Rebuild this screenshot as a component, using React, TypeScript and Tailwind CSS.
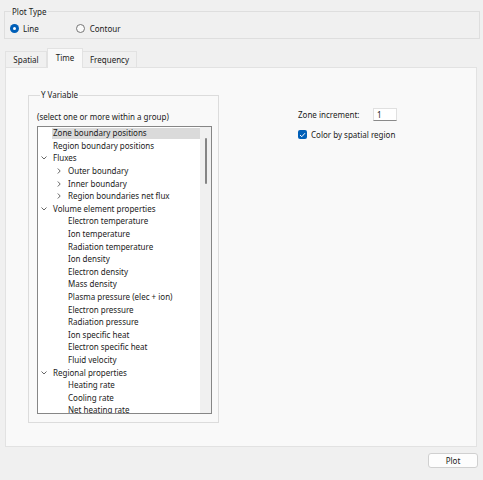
import React from "react";

type Item = { label: string; level: 0 | 1; chevron?: "down" | "right"; selected?: boolean };

const items: Item[] = [
  { label: "Zone boundary positions", level: 0, selected: true },
  { label: "Region boundary positions", level: 0 },
  { label: "Fluxes", level: 0, chevron: "down" },
  { label: "Outer boundary", level: 1, chevron: "right" },
  { label: "Inner boundary", level: 1, chevron: "right" },
  { label: "Region boundaries net flux", level: 1, chevron: "right" },
  { label: "Volume element properties", level: 0, chevron: "down" },
  { label: "Electron temperature", level: 1 },
  { label: "Ion temperature", level: 1 },
  { label: "Radiation temperature", level: 1 },
  { label: "Ion density", level: 1 },
  { label: "Electron density", level: 1 },
  { label: "Mass density", level: 1 },
  { label: "Plasma pressure (elec + ion)", level: 1 },
  { label: "Electron pressure", level: 1 },
  { label: "Radiation pressure", level: 1 },
  { label: "Ion specific heat", level: 1 },
  { label: "Electron specific heat", level: 1 },
  { label: "Fluid velocity", level: 1 },
  { label: "Regional properties", level: 0, chevron: "down" },
  { label: "Heating rate", level: 1 },
  { label: "Cooling rate", level: 1 },
  { label: "Net heating rate", level: 1 },
];

function ChevronDown() {
  return (
    <svg width="6" height="4" viewBox="0 0 6 4" className="block">
      <path d="M0.5 0.5 L3 3 L5.5 0.5" fill="none" stroke="#555" strokeWidth="0.9" />
    </svg>
  );
}

function ChevronRight() {
  return (
    <svg width="4" height="6" viewBox="0 0 4 6" className="block">
      <path d="M0.8 0.5 L3.2 3 L0.8 5.5" fill="none" stroke="#555" strokeWidth="0.9" />
    </svg>
  );
}

function Row({ item }: { item: Item }) {
  return (
    <div className="flex h-[12.6px] items-center">
      {item.level === 0 ? (
        <div className="flex w-[14px] shrink-0 items-center pl-[3px]">
          {item.chevron === "down" ? <ChevronDown /> : null}
        </div>
      ) : (
        <div className="flex w-[29px] shrink-0 items-center pl-[19px]">
          {item.chevron === "right" ? <ChevronRight /> : null}
        </div>
      )}
      <div
        className={
          "flex h-[11.5px] flex-1 items-center pl-[1px] " + (item.selected ? "bg-[#dadada]" : "")
        }
      >
        <span className="whitespace-nowrap leading-none">{item.label}</span>
      </div>
    </div>
  );
}

export default function App() {
  return (
    <div
      className="flex h-[480px] w-[483px] flex-col bg-[#f0f0f0] text-[8px] text-[#1b1b1b]"
      style={{ fontFamily: '"Segoe UI", "Noto Sans", "Open Sans", sans-serif' }}
    >
      {/* Plot Type group */}
      <div className="pl-[4px] pr-[3px] pt-[5px]">
        <fieldset className="h-[34px] border border-[#dedede] px-[5px]">
          <legend className="ml-[1px] px-[1px] leading-[13px]">Plot Type</legend>
          <div className="mt-[6px] flex items-center">
            <div className="flex items-center">
              <span className="flex h-[9px] w-[9px] items-center justify-center rounded-full bg-[#005fb8]">
                <span className="h-[3.5px] w-[3.5px] rounded-full bg-white" />
              </span>
              <span className="ml-[4px] leading-none">Line</span>
            </div>
            <div className="ml-[37px] flex items-center">
              <span className="h-[9px] w-[9px] rounded-full border border-[#767676] bg-[#fafafa]" />
              <span className="ml-[5px] leading-none">Contour</span>
            </div>
          </div>
        </fieldset>
      </div>

      {/* Tabs */}
      <div className="mt-[9px] flex items-end pl-[5px]">
        <div className="flex h-[16px] w-[42px] items-center justify-center border border-b-0 border-[#e2e2e2] bg-[#f0f0f0]">
          Spatial
        </div>
        <div className="relative z-10 -mb-px flex h-[20px] w-[36px] items-center justify-center border border-b-0 border-[#e2e2e2] bg-[#f9f9f9] pb-[2px]">
          Time
        </div>
        <div className="flex h-[16px] w-[54px] items-center justify-center border border-b-0 border-l-0 border-[#e2e2e2] bg-[#f0f0f0]">
          Frequency
        </div>
      </div>

      {/* Tab panel */}
      <div className="ml-[5px] mr-[6px] flex h-[380px] border border-[#e2e2e2] bg-[#f9f9f9]">
        <div className="ml-[22px] mt-[21px]">
          <fieldset className="h-[334px] w-[191px] border border-[#dcdcdc] pl-[8px] pr-[6px]">
            <legend className="ml-[3px] px-[1px] leading-[12px]">Y Variable</legend>
            <div className="mt-[12px] leading-none">(select one or more within a group)</div>
            <div className="mt-[5px] flex h-[288px] overflow-hidden border border-[#868686] bg-white">
              <div className="flex-1 overflow-hidden">
                {items.map((it, i) => (
                  <Row key={i} item={it} />
                ))}
              </div>
              <div className="flex w-[11px] shrink-0 justify-center bg-[#f0f0f0] pt-[11px]">
                <div className="h-[46px] w-[2px] rounded-full bg-[#858585]" />
              </div>
            </div>
          </fieldset>
        </div>

        <div className="ml-[79px] mt-[40px] flex flex-col">
          <div className="flex items-center">
            <span className="w-[75px] leading-none">Zone increment:</span>
            <div className="flex h-[13px] w-[24px] items-center border border-[#e0e0e0] border-b-[#8a8a8a] bg-white pl-[3px] leading-none">
              1
            </div>
          </div>
          <div className="mt-[9px] flex items-center">
            <span className="flex h-[9px] w-[9px] items-center justify-center rounded-[2px] bg-[#005fb8]">
              <svg width="7" height="6" viewBox="0 0 7 6">
                <path d="M1 3 L2.8 4.7 L6 1.2" fill="none" stroke="white" strokeWidth="1" />
              </svg>
            </span>
            <span className="ml-[4px] leading-none">Color by spatial region</span>
          </div>
        </div>
      </div>

      {/* Bottom button */}
      <div className="mt-[6px] flex justify-end pr-[5px]">
        <div className="flex h-[15px] w-[50px] items-center justify-center rounded-[3px] border border-[#d0d0d0] bg-[#fdfdfd] leading-none">
          Plot
        </div>
      </div>
    </div>
  );
}
